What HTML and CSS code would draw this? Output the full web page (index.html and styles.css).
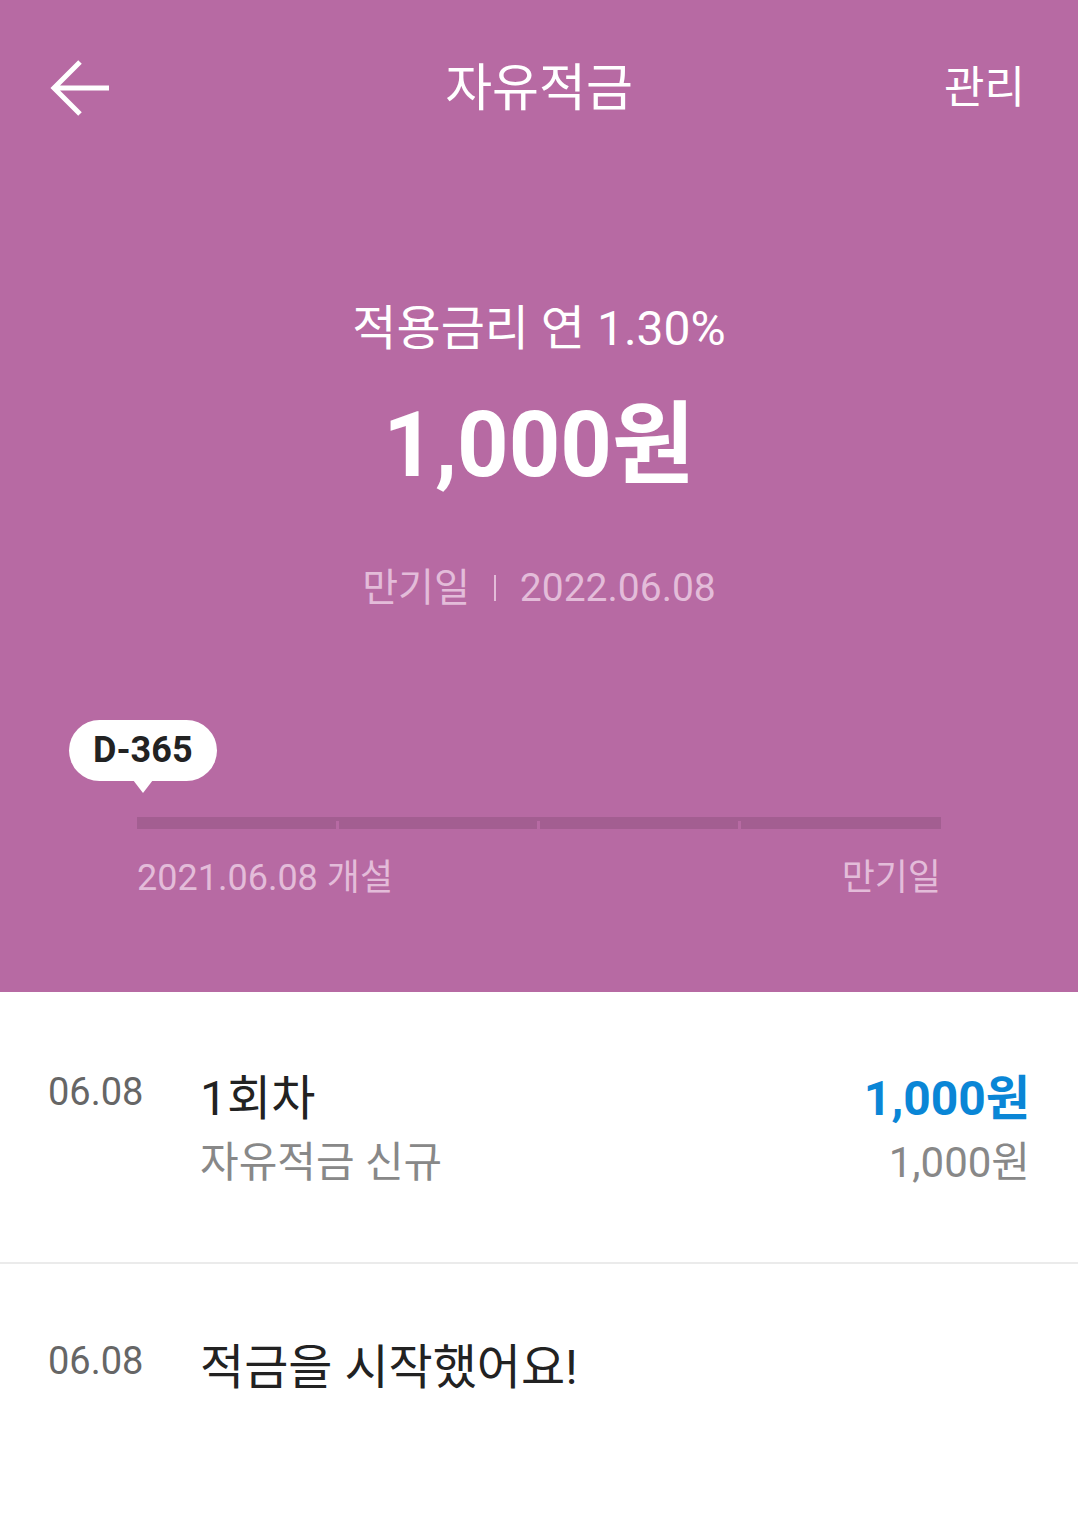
FILE: index.html
```html
<!DOCTYPE html>
<html lang="ko">
<head>
    <meta charset="UTF-8">
    <title>자유적금</title>
    <link rel="stylesheet" href="styles.css">
</head>
<body>
    <div class="hero">
        <div class="topbar">
            <button class="back" type="button" aria-label="뒤로">
                <svg width="62" height="58" viewBox="0 0 62 58">
                    <path d="M60 29 H5 M31 3 L5 29 L31 55" fill="none" stroke="#fff" stroke-width="5"/>
                </svg>
            </button>
            <h1 class="title">자유적금</h1>
            <a class="manage" href="#">관리</a>
        </div>

        <div class="summary">
            <p class="rate">적용금리 연 1.30%</p>
            <p class="balance">1,000원</p>
            <p class="maturity">
                <span>만기일</span>
                <span class="sep"></span>
                <span>2022.06.08</span>
            </p>
        </div>

        <div class="timeline">
            <div class="badge">D-365</div>
            <div class="bar">
                <div class="seg"></div>
                <div class="seg"></div>
                <div class="seg"></div>
                <div class="seg"></div>
            </div>
            <div class="bar-labels">
                <span>2021.06.08 개설</span>
                <span>만기일</span>
            </div>
        </div>
    </div>

    <ul class="history">
        <li class="row">
            <span class="date">06.08</span>
            <div class="info">
                <div class="name">1회차</div>
                <div class="desc">자유적금 신규</div>
            </div>
            <div class="amounts">
                <div class="paid">1,000원</div>
                <div class="total">1,000원</div>
            </div>
        </li>
        <li class="row">
            <span class="date">06.08</span>
            <div class="info">
                <div class="name">적금을 시작했어요!</div>
            </div>
        </li>
    </ul>
</body>
</html>
```

FILE: styles.css
```css
* { margin: 0; padding: 0; box-sizing: border-box; }
body {
    font-family: Roboto, "Noto Sans CJK KR", sans-serif;
    background-color: #fff;
    color: #222;
}
.hero {
    background-color: #b76aa3;
    color: #fff;
    padding-bottom: 92px;
}
.topbar {
    height: 176px;
    display: grid;
    grid-template-columns: 1fr auto 1fr;
    align-items: center;
    padding: 0 53px 0 49px;
}
.back {
    background: none;
    border: none;
    justify-self: start;
    display: flex;
    cursor: pointer;
}
.title {
    font-size: 51px;
    font-weight: 400;
    line-height: 1;
    margin-left: 4px;
}
.manage {
    justify-self: end;
    color: #fff;
    text-decoration: none;
    font-size: 44px;
    line-height: 1;
}
.summary {
    text-align: center;
    margin-top: 122px;
}
.rate {
    font-size: 48px;
    line-height: 62px;
}
.balance {
    font-size: 90px;
    font-weight: 700;
    line-height: 110px;
    margin-top: 31px;
}
.maturity {
    margin-top: 62px;
    font-size: 39px;
    line-height: 50px;
    color: #e3bcd9;
    display: flex;
    justify-content: center;
    align-items: center;
    gap: 24px;
}
.sep {
    width: 2px;
    height: 26px;
    background-color: #e3bcd9;
}
.timeline {
    margin-top: 107px;
    padding: 0 137px;
}
.badge {
    position: relative;
    display: inline-block;
    margin-left: -68px;
    height: 61px;
    padding: 0 24px;
    border-radius: 31px;
    background-color: #fff;
    color: #222;
    font-size: 36px;
    font-weight: 700;
    line-height: 61px;
}
.badge::after {
    content: '';
    position: absolute;
    left: 64px;
    bottom: -12px;
    border-left: 10px solid transparent;
    border-right: 10px solid transparent;
    border-top: 13px solid #fff;
}
.bar {
    display: flex;
    height: 12px;
    margin-top: 36px;
    background-color: #a35e91;
}
.seg {
    flex: 1;
    position: relative;
}
.seg + .seg::before {
    content: '';
    position: absolute;
    left: -2px;
    bottom: 0;
    width: 3px;
    height: 8px;
    background-color: #b76aa3;
}
.bar-labels {
    display: flex;
    justify-content: space-between;
    margin-top: 27px;
    font-size: 36px;
    line-height: 44px;
    color: #e3bcd9;
}
.history {
    list-style: none;
}
.row {
    display: flex;
    align-items: flex-start;
    padding: 77px 48px 71px 48px;
}
.row + .row {
    border-top: 2px solid #ebebeb;
    padding-top: 74px;
}
.date {
    width: 152px;
    font-size: 38px;
    line-height: 46px;
    color: #666;
}
.info {
    flex: 1;
}
.name {
    font-size: 48px;
    line-height: 60px;
    color: #222;
}
.desc {
    margin-top: 6px;
    font-size: 42px;
    line-height: 56px;
    color: #888;
}
.amounts {
    text-align: right;
}
.paid {
    font-size: 48px;
    font-weight: 700;
    line-height: 60px;
    color: #0a86d6;
}
.total {
    margin-top: 6px;
    font-size: 42px;
    line-height: 56px;
    color: #888;
}
```
